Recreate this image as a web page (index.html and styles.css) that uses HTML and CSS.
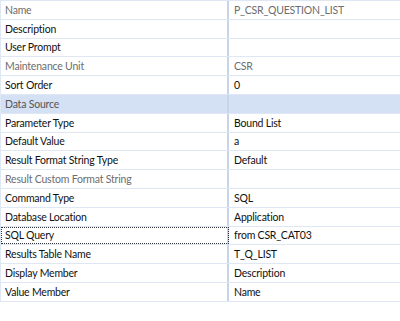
FILE: index.html
```html
<!DOCTYPE html>
<html lang="en">
<head>
  <meta charset="UTF-8"/>
  <title>Parameter Properties</title>
  <link rel="stylesheet" href="styles.css">
</head>
<body>

<div class="grid">
  <div class="row readonly"><div class="name">Name</div><div class="value">P_CSR_QUESTION_LIST</div></div>
  <div class="row"><div class="name">Description</div><div class="value"></div></div>
  <div class="row"><div class="name">User Prompt</div><div class="value"></div></div>
  <div class="row readonly"><div class="name">Maintenance Unit</div><div class="value">CSR</div></div>
  <div class="row"><div class="name">Sort Order</div><div class="value">0</div></div>
  <div class="row category"><div class="name">Data Source</div><div class="value"></div></div>
  <div class="row"><div class="name">Parameter Type</div><div class="value">Bound List</div></div>
  <div class="row"><div class="name">Default Value</div><div class="value">a</div></div>
  <div class="row"><div class="name">Result Format String Type</div><div class="value">Default</div></div>
  <div class="row readonly"><div class="name">Result Custom Format String</div><div class="value"></div></div>
  <div class="row"><div class="name">Command Type</div><div class="value">SQL</div></div>
  <div class="row"><div class="name">Database Location</div><div class="value">Application</div></div>
  <div class="row focused"><div class="name">SQL Query</div><div class="value">from CSR_CAT03</div></div>
  <div class="row"><div class="name">Results Table Name</div><div class="value">T_Q_LIST</div></div>
  <div class="row"><div class="name">Display Member</div><div class="value">Description</div></div>
  <div class="row"><div class="name">Value Member</div><div class="value">Name</div></div>
</div>

</body>
</html>
```

FILE: styles.css
```css
body {
  font-family: Lato, 'Open Sans', sans-serif;
  font-size: 10.5px;
  letter-spacing: -0.2px;
  margin: 0;
  background-color: white;
  color: #111;
}

.grid {
  border-top: 1px solid #dfe7f5;
  border-left: 1px solid #dfe7f5;
}

.row {
  display: flex;
  height: 18.8px;
  box-sizing: border-box;
  border-bottom: 1px solid #dfe7f5;
}

.name {
  width: 228px;
  flex: none;
  box-sizing: border-box;
  padding-left: 4px;
  border-right: 2px solid #c8d4ec;
  display: flex;
  align-items: center;
}

.value {
  flex: 1;
  padding-left: 5px;
  display: flex;
  align-items: center;
}

.readonly .name,
.readonly .value {
  color: #6d6d6d;
}

.category {
  background-color: #d4e0f4;
}

.category .name {
  color: #555;
}

.focused .name {
  outline: 1px dotted #333;
  outline-offset: -1px;
}
```
